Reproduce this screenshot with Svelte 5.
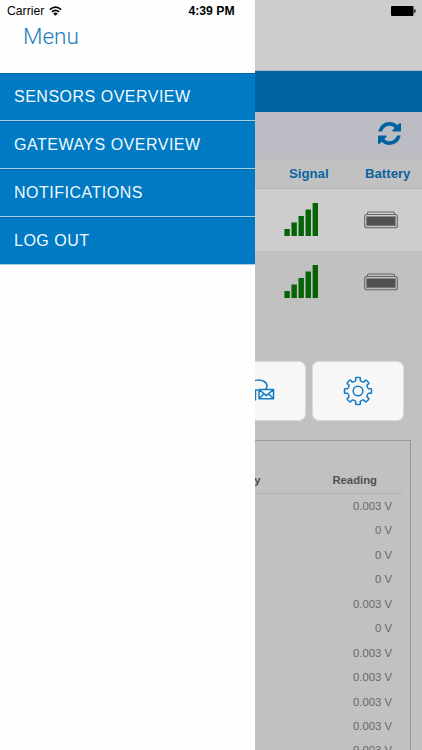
<script>
  const menuItems = ["Sensors Overview", "Gateways Overview", "Notifications", "Log Out"];

  const sensors = [
    { id: 1, signal: 5 },
    { id: 2, signal: 5 },
  ];

  const readings = [
    "0.003 V",
    "0 V",
    "0 V",
    "0 V",
    "0.003 V",
    "0 V",
    "0.003 V",
    "0.003 V",
    "0.003 V",
    "0.003 V",
    "0.003 V",
  ];

  const barHeights = [7, 13.5, 20, 26.5, 33];
  const gearTeeth = [0, 45, 90, 135, 180, 225, 270, 315];

  // one tooth and the valley after it, turned round the centre
  function gearPath() {
    const point = (radius, angle) => {
      const a = (angle * Math.PI) / 180;
      return `${(15 + radius * Math.sin(a)).toFixed(2)} ${(15 - radius * Math.cos(a)).toFixed(2)}`;
    };
    return (
      gearTeeth
        .map((a, i) => {
          const start = i === 0 ? "M" : "L";
          return (
            `${start}${point(10.7, a - 12)}L${point(13, a - 10.5)}Q${point(13.7, a - 9.5)} ${point(13.6, a - 6)}` +
            `L${point(13.6, a + 6)}Q${point(13.7, a + 9.5)} ${point(13, a + 10.5)}L${point(10.7, a + 12)}` +
            `Q${point(9.5, a + 22.5)} ${point(10.7, a + 33)}`
          );
        })
        .join("") + "Z"
    );
  }
</script>

<div class="screen">
  <main class="page">
    <div class="page-top"></div>
    <div class="title-bar"></div>
    <div class="toolbar">
      <svg class="refresh" viewBox="0 0 1536 1536" role="img" aria-label="Refresh">
        <path d="M1511 928q0 5-1 7-64 268-268 434.500T764 1536q-146 0-282.500-55T238 1324l-129 129q-19 19-45 19t-45-19-19-45V960q0-26 19-45t45-19h448q26 0 45 19t19 45-19 45l-137 137q71 66 161 102t187 36q134 0 250-65t186-179q11-17 53-117 8-23 30-23h192q13 0 22.500 9.500t9.500 22.500zm25-800v448q0 26-19 45t-45 19h-448q-26 0-45-19t-19-45 19-45l138-138Q969 256 768 256q-134 0-250 65T332 500q-11 17-53 117-8 23-30 23H50q-13 0-22.500-9.500T18 608v-7q65-268 270-434.500T768 0q146 0 284 55.500T1297 212l130-129q19-19 45-19t45 19 19 45z" />
      </svg>
    </div>

    <div class="sensor-row sensor-head">
      <span class="signal-cell">Signal</span>
      <span class="battery-cell">Battery</span>
    </div>
    {#each sensors as sensor (sensor.id)}
      <div class="sensor-row" class:alt={sensor.id % 2 === 0}>
        <div class="signal-cell bars">
          <svg width="35" height="33" viewBox="0 0 35 33">
            {#each barHeights.slice(0, sensor.signal) as height, i}
              <rect x={0.4 + i * 7.050} y={33 - height} width="5.400" {height} />
            {/each}
          </svg>
        </div>
        <div class="battery-cell">
          <svg class="battery" width="34" height="18" viewBox="0 0 34 18">
            <path d="M3.500 3.300V2.200Q3.500 1 4.800 1H29.200Q30.500 1 30.500 2.200V3.300" />
            <rect x=".7" y="3.500" width="32.600" height="13.300" rx="2" />
            <rect class="charge" x="2.500" y="5.500" width="29" height="9.300" />
          </svg>
        </div>
      </div>
    {/each}

    <div class="actions">
      <button class="action" aria-label="Notifications">
        <svg width="46" height="30" viewBox="0 0 46 30">
          <path d="M13 14a9 9 0 0 1-1-3C12 2 30 2 30 10q0 2-1.500 3M13 14H21M18.500 14v10.500" />
          <path d="M22 13.500H36.500V22.800H22ZM22 13.500 29.300 19.600 36.500 13.500M22 22.800 27 17.700M36.500 22.800 31.500 17.700" />
        </svg>
      </button>
      <button class="action" aria-label="Settings">
        <svg width="30" height="30" viewBox="0 0 30 30">
          <path d={gearPath()} />
          <circle cx="15" cy="15" r="4.800" />
        </svg>
      </button>
    </div>

    <section class="history">
      <div class="history-head">
        <span>Battery</span>
        <span>Reading</span>
      </div>
      {#each readings as reading}
        <div class="reading">{reading}</div>
      {/each}
    </section>
  </main>

  <aside class="drawer">
    <h1>Menu</h1>
    <nav>
      {#each menuItems as item}
        <a href="#menu">{item}</a>
      {/each}
    </nav>
  </aside>

  <div class="status">
    <div class="carrier">
      <span>Carrier</span>
      <svg width="13" height="10" viewBox="0 0 13 10">
        <path d="M.8 3.600Q6.500-1.300 12.200 3.600M2.800 5.900Q6.500 2.700 10.200 5.900" />
        <path class="dot" d="M4.200 7.400Q6.500 5.400 8.800 7.400L6.500 9.700Z" />
      </svg>
    </div>
    <strong>4:39 PM</strong>
    <svg class="phone-battery" width="25" height="10" viewBox="0 0 25 10">
      <rect width="22.500" height="10" rx="1" />
      <rect x="23.200" y="3.300" width="1.300" height="3.400" rx=".6" />
    </svg>
  </div>
</div>

<style>
  :global(body) {
    margin: 0;
  }

  .screen {
    position: relative;
    height: 750px;
    overflow: hidden;
    background: #c1c1c1;
    font-family: "Liberation Sans", Arial, sans-serif;
  }

  .page-top {
    height: 70px;
    background: #cdcdcd;
    border-bottom: 1px solid #a9b3ba;
  }

  .title-bar {
    height: 41px;
    background: #00629f;
  }

  .toolbar {
    display: flex;
    align-items: center;
    justify-content: flex-end;
    box-sizing: border-box;
    height: 47px;
    padding: 0 21px 4px 0;
    background: #bcbcc4;
  }

  .refresh {
    width: 23px;
    height: 23px;
    fill: #00629f;
  }

  .sensor-row {
    display: flex;
    align-items: center;
    justify-content: flex-end;
    box-sizing: border-box;
    height: 62px;
    background: #cdcdcd;
  }

  .sensor-row.alt {
    background: #c1c1c1;
  }

  .sensor-head {
    height: 30px;
    background: #c1c1c1;
    border-bottom: 1px solid #b5b5b5;
    color: #0a64a0;
    font-size: 13.200px;
    font-weight: bold;
  }

  .signal-cell {
    width: 76px;
  }

  .battery-cell {
    width: 57px;
    line-height: 0;
  }

  .sensor-head .battery-cell {
    line-height: normal;
  }

  .bars {
    width: 81px;
    height: 33px;
    margin-bottom: 2px;
    line-height: 0;
  }

  .bars svg {
    fill: #066306;
  }

  .sensor-row .battery {
    margin-left: -1px;
    fill: none;
    stroke: #666;
    stroke-width: 1.100;
  }

  .battery .charge {
    fill: #505050;
    stroke: #858585;
    stroke-width: 0.600;
  }

  .actions {
    display: flex;
    justify-content: flex-end;
    gap: 6px;
    padding: 48px 18px 0 0;
  }

  .action {
    display: flex;
    align-items: center;
    justify-content: center;
    width: 92px;
    height: 60px;
    padding: 0;
    border: 1px solid #dadada;
    border-radius: 7px;
    background: #f7f7f7;
  }

  .action svg {
    fill: none;
    stroke: #147ac2;
    stroke-width: 1.500;
    stroke-linejoin: round;
  }

  .history {
    box-sizing: border-box;
    height: 400px;
    margin: 19px 11px 0;
    padding: 26px 7px 0;
    border: 1px solid #989898;
    color: #686868;
    font-size: 11.300px;
  }

  .history-head {
    display: flex;
    justify-content: flex-end;
    gap: 72px;
    height: 26px;
    padding-right: 26px;
    border-bottom: 1px solid #b2b2b2;
    color: #505050;
    font-weight: bold;
    line-height: 26px;
  }

  .reading {
    height: 24.450px;
    padding-right: 11px;
    line-height: 25.500px;
    text-align: right;
  }

  .drawer {
    position: absolute;
    top: 0;
    left: 0;
    width: 255px;
    height: 750px;
    background: #fefefe;
  }

  h1 {
    height: 50px;
    margin: 0;
    padding: 23px 0 0 23px;
    color: #1f7dbb;
    font-family: Roboto, sans-serif;
    font-size: 22.500px;
    font-weight: 300;
    line-height: 27px;
  }

  nav a {
    display: block;
    box-sizing: border-box;
    height: 48px;
    padding-left: 14px;
    border-top: 1px solid #0069a8;
    border-bottom: 1px solid #a6cfe8;
    background: #007ac3;
    color: #f2f9fd;
    font-size: 16px;
    line-height: 46px;
    letter-spacing: 0.500px;
    text-decoration: none;
    text-transform: uppercase;
  }

  .status {
    position: absolute;
    top: 0;
    left: 0;
    display: grid;
    grid-template-columns: 1fr auto 1fr;
    align-items: center;
    box-sizing: border-box;
    width: 422px;
    height: 22px;
    padding: 0 6px 0 7px;
    font-size: 12.200px;
  }

  .carrier {
    display: flex;
    align-items: center;
    gap: 5px;
  }

  .carrier svg {
    fill: none;
    stroke: #000;
    stroke-width: 1.600;
  }

  .carrier .dot {
    fill: #000;
    stroke: none;
  }

  .phone-battery {
    justify-self: end;
  }
</style>
